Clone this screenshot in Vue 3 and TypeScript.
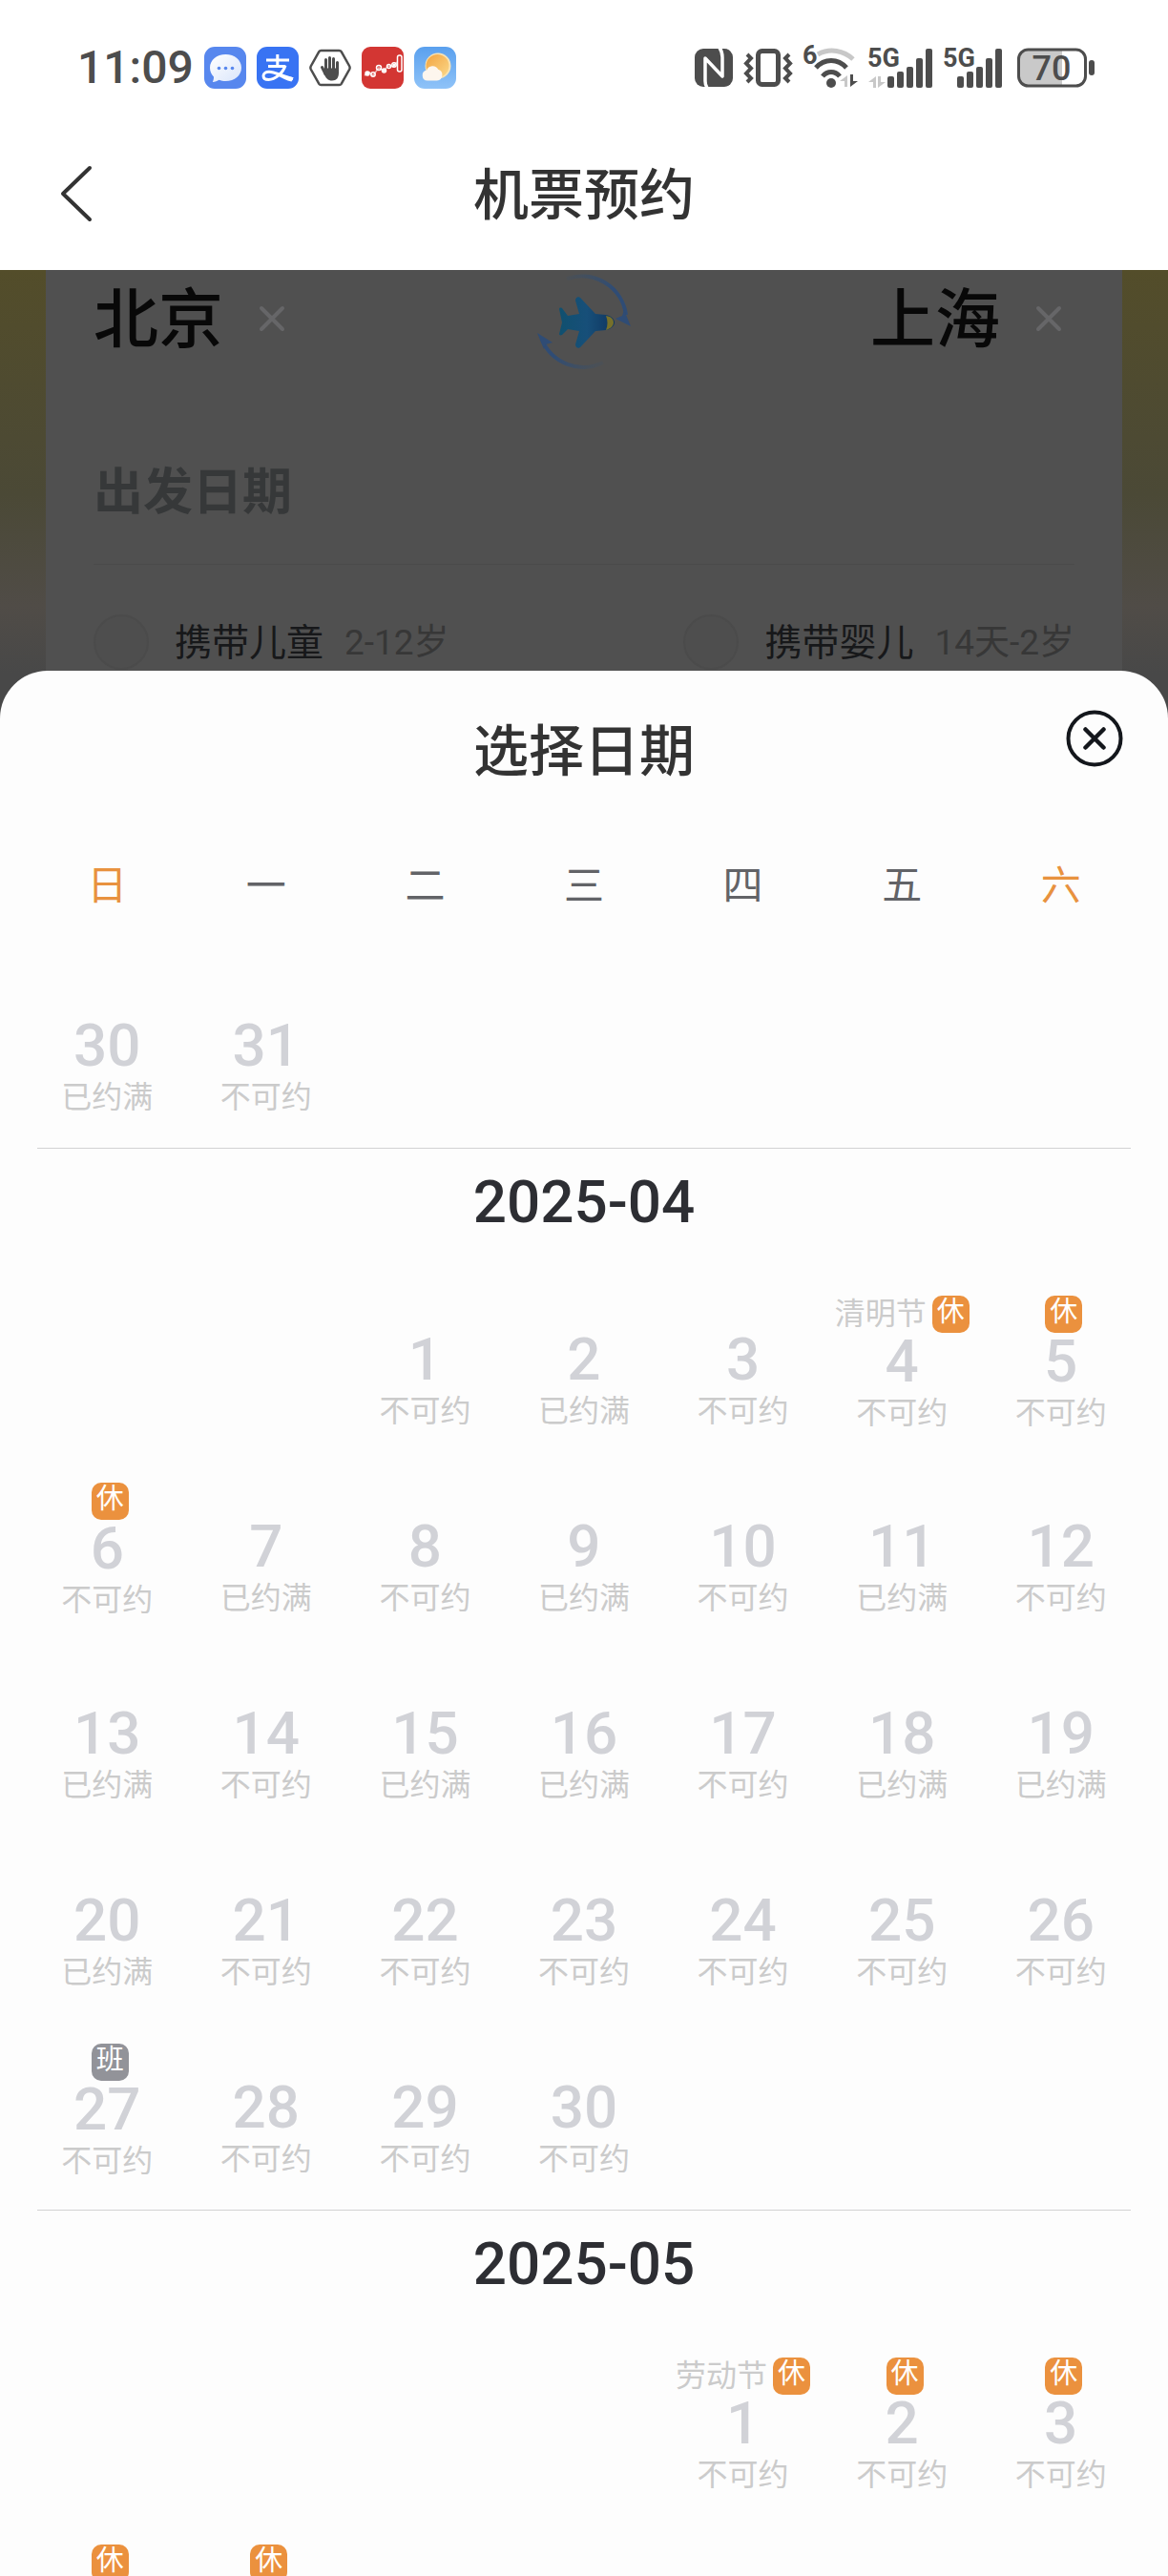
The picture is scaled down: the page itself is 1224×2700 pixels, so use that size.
<script setup lang="ts">
interface Day {
  day: number
  status: string
  label?: string
  tag?: string
}

interface Month {
  key: string
  title: string
  offset: number
  days: Day[]
}

const NO = '不可约'
const FULL = '已约满'

const weekdays: string[] = ['日', '一', '二', '三', '四', '五', '六']

const fullInApril: number[] = [2, 7, 9, 11, 13, 15, 16, 18, 19, 20]
const aprilTags: Record<number, string> = { 4: '休', 5: '休', 6: '休', 27: '班' }

const april: Day[] = Array.from({ length: 30 }, (_, i) => {
  const day = i + 1
  return {
    day,
    status: fullInApril.includes(day) ? FULL : NO,
    tag: aprilTags[day],
    label: day === 4 ? '清明节' : undefined,
  }
})

const may: Day[] = Array.from({ length: 5 }, (_, i) => ({
  day: i + 1,
  status: NO,
  tag: '休',
  label: i === 0 ? '劳动节' : undefined,
}))

const months: Month[] = [
  { key: '2025-03', title: '', offset: 0, days: [{ day: 30, status: FULL }, { day: 31, status: NO }] },
  { key: '2025-04', title: '2025-04', offset: 2, days: april },
  { key: '2025-05', title: '2025-05', offset: 4, days: may },
]

const bars: number[] = [12, 17, 22, 31, 41]
</script>

<template>
  <div class="app">
    <div class="status-bar">
      <div class="status-side">
        <span class="clock">11:09</span>
        <svg class="app-icon" viewBox="0 0 44 44" aria-hidden="true">
          <defs>
            <linearGradient id="bubble" x1="0" y1="0" x2="1" y2="1">
              <stop offset="0" stop-color="#fff" />
              <stop offset="1" stop-color="#d9e5fb" />
            </linearGradient>
          </defs>
          <rect width="44" height="44" rx="11" fill="#5787ee" />
          <path d="M22.500 8C13 8 6 14 6 22c0 4 1.500 7 4 9.500 0 2-.3 3.500-1.200 5.500 2.700 0 5-1 6.700-2.200 2 .8 4.500 1.200 7 1.200 9.500 0 16.500-6 16.500-14S32 8 22.500 8z" fill="url(#bubble)" />
          <g fill="#5787ee"><circle cx="15.500" cy="22.500" r="1.800" /><circle cx="22.500" cy="22.500" r="1.800" /><circle cx="29.500" cy="22.500" r="1.800" /></g>
        </svg>
        <svg class="app-icon" viewBox="0 0 44 44" aria-hidden="true">
          <rect width="44" height="44" rx="11" fill="#3873f3" />
          <g fill="none" stroke="#fff" stroke-width="3">
            <path d="M10 14h24M12 20.500h18M21.800 8v12" />
            <path d="M30 19.500C27.500 28 19 34.500 12.500 34.500c-3.500 0-5.500-1.500-5.500-4 0-2.500 2.500-4.300 6-4.300 6 0 12 4 25 7.500" />
          </g>
          <path d="M24 29l14.500 3.200-2 4.300C31 35.500 27 33 22 30.500z" fill="#fff" />
        </svg>
        <svg class="app-icon" viewBox="0 0 44 44" aria-hidden="true">
          <path d="M12.500 4h19c1 0 1.700.4 2.200 1.200l8.600 15.300c.5 1 .5 2 0 3L33.700 38.800c-.5.8-1.200 1.200-2.200 1.200h-19c-1 0-1.700-.4-2.200-1.200L1.700 23.500c-.5-1-.5-2 0-3L10.300 5.200C10.800 4.400 11.500 4 12.500 4z" fill="none" stroke="#4d4d4d" stroke-width="2.500" />
          <g stroke="#4d4d4d" stroke-width="3" stroke-linecap="round" fill="none">
            <path d="M17.500 13.500v11M21.500 11.500v12M25.500 12.500v12M29.500 16.500v9M13.500 21.500l3.500 7" />
          </g>
          <path d="M16 22.500h15v5c0 5-2.500 8-7 8-4.500 0-6.500-2.500-9-8z" fill="#4d4d4d" />
        </svg>
        <svg class="app-icon" viewBox="0 0 44 44" aria-hidden="true">
          <rect width="44" height="44" rx="9" fill="#d33633" />
          <g fill="none" stroke="#fff" stroke-width="1.500">
            <path d="M3 30l5-3 4 3 6-8 5 3 5-5 5 1 4-5" opacity=".6" />
            <circle cx="6" cy="28" r="2" fill="#fff" />
            <circle cx="12" cy="29" r="2.200" />
            <circle cx="18" cy="22" r="2.500" />
            <circle cx="23.500" cy="25" r="2" />
            <circle cx="28.500" cy="20.500" r="2" />
            <circle cx="34" cy="19" r="2.200" />
            <rect x="37.500" y="9" width="4.500" height="17" rx="2" />
          </g>
          <circle cx="23.500" cy="25" r="1.500" fill="#fff" /><circle cx="34" cy="19" r="1.500" fill="#fff" />
        </svg>
        <svg class="app-icon" viewBox="0 0 44 44" aria-hidden="true">
          <defs>
            <linearGradient id="sky" x1="0" y1="0" x2="0" y2="1">
              <stop offset="0" stop-color="#5aa0ee" />
              <stop offset="1" stop-color="#8fc3f8" />
            </linearGradient>
            <linearGradient id="sun" x1="0" y1="0" x2="1" y2="1">
              <stop offset="0" stop-color="#f2a340" />
              <stop offset="1" stop-color="#fbd98a" />
            </linearGradient>
          </defs>
          <rect width="44" height="44" rx="11" fill="url(#sky)" />
          <circle cx="25" cy="20" r="13.500" fill="#f8e3b4" />
          <circle cx="24.500" cy="20" r="12" fill="url(#sun)" />
          <path d="M14 35.500a5.500 5.500 0 0 1-.8-10.900 6.500 6.500 0 0 1 12-.8A6 6 0 0 1 24 35.500z" fill="#fdf6ee" />
        </svg>
      </div>

      <div class="status-side status-right">
        <svg width="40" height="42" viewBox="0 0 40 42" aria-hidden="true">
          <rect y="1" width="40" height="40" rx="9" fill="#4d4d4d" />
          <path d="M13 42c-1.500-2-2-4-2-7V11l18 19V10c0-4-1-7-3-10" fill="none" stroke="#fff" stroke-width="3.500" stroke-linejoin="round" />
        </svg>
        <svg width="50" height="42" viewBox="0 0 50 42" aria-hidden="true">
          <rect x="14.500" y="3.500" width="21" height="35" rx="4" fill="none" stroke="#4d4d4d" stroke-width="5" />
          <path d="M3 7l4 4-5 5.500 5 5L2 27l5 5-4 4M47 7l-4 4 5 5.500-5 5 5 5.500-5 5 4 4" fill="none" stroke="#4d4d4d" stroke-width="4" />
        </svg>
        <svg width="56" height="44" viewBox="0 0 56 44" aria-hidden="true">
          <text x="-1" y="18" class="tiny-text">6</text>
          <path d="M15 8c13-7 27-4 37 5" fill="none" stroke="#c8c8c8" stroke-width="5" />
          <path d="M13 22c9-10 23-10 32 0M20 31c5-6 13-6 18 0" fill="none" stroke="#4d4d4d" stroke-width="5" />
          <circle cx="29" cy="38" r="5" fill="#4d4d4d" />
          <path d="M46 30v12h-3v-6h-5z" fill="#c8c8c8" />
          <path d="M49 42V29h3v7h5z" fill="#4d4d4d" />
        </svg>
        <svg width="67" height="42" viewBox="0 0 67 42" aria-hidden="true">
          <text x="-1" y="20" class="tiny-text">5G</text>
          <path d="M8 30v12H5v-6H0zM10 42V30h3v6h5z" fill="#c8c8c8" />
          <rect v-for="(h, i) in bars" :key="i" :x="20 + i * 10" :y="42 - h" width="7" :height="h" rx="2" fill="#4d4d4d" />
        </svg>
        <svg width="61" height="42" viewBox="0 0 61 42" aria-hidden="true">
          <text x="-1" y="20" class="tiny-text">5G</text>
          <rect v-for="(h, i) in bars" :key="i" :x="14 + i * 10" :y="42 - h" width="7" :height="h" rx="2" fill="#4d4d4d" />
        </svg>
        <svg class="battery" width="82" height="42" viewBox="0 0 82 42" aria-hidden="true">
          <path d="M12 3h35v36H12c-6 0-10-4-10-10V13C2 7 6 3 12 3z" fill="#c9c9c9" />
          <rect x="1.500" y="2" width="70" height="38" rx="10" fill="none" stroke="#4d4d4d" stroke-width="3" />
          <rect x="75" y="13" width="6" height="16" rx="3" fill="#4d4d4d" />
          <text x="36" y="34" text-anchor="middle" class="battery-text">70</text>
        </svg>
      </div>
    </div>

    <header class="nav">
      <button type="button" class="back" aria-label="返回">
        <svg width="40" height="64" viewBox="0 0 40 64" aria-hidden="true">
          <path d="M34 5L6 32l28 27" fill="none" stroke="#333" stroke-width="4" stroke-linecap="round" stroke-linejoin="round" />
        </svg>
      </button>
      <h1 class="nav-title">机票预约</h1>
    </header>

    <main class="trip">
      <section class="card">
        <div class="cities">
          <div class="city">
            <span>北京</span>
            <button type="button" class="clear" aria-label="清除出发城市">
              <svg width="54" height="54" viewBox="0 0 54 54"><path d="M16 16l22 22M38 16L16 38" stroke="#666668" stroke-width="4" stroke-linecap="round" /></svg>
            </button>
          </div>
          <button type="button" class="swap" aria-label="交换城市">
            <svg width="100" height="100" viewBox="0 0 100 100">
              <defs>
                <linearGradient id="arcTop" gradientUnits="userSpaceOnUse" x1="28" y1="0" x2="80" y2="20">
                  <stop offset="0" stop-color="#38506a" stop-opacity="0.1" />
                  <stop offset="1" stop-color="#2f4c75" />
                </linearGradient>
                <linearGradient id="arcBottom" gradientUnits="userSpaceOnUse" x1="20" y1="80" x2="72" y2="98">
                  <stop offset="0" stop-color="#2f4c75" />
                  <stop offset="1" stop-color="#38506a" stop-opacity="0.1" />
                </linearGradient>
                <linearGradient id="plane" x1="0" y1="0" x2="1" y2="0">
                  <stop offset="0" stop-color="#10506f" />
                  <stop offset="0.5" stop-color="#174f79" />
                  <stop offset="1" stop-color="#0f3560" />
                </linearGradient>
              </defs>
              <path d="M32 6A47 47 0 0 1 94 44" fill="none" stroke="url(#arcTop)" stroke-width="4" />
              <path d="M92 39l7 17-16-8 7-3z" fill="#2f4c75" />
              <path d="M70 94A47 47 0 0 1 6 70" fill="none" stroke="url(#arcBottom)" stroke-width="4" />
              <path d="M8 80L1 63l16 10-7 2z" fill="#2f4c75" />
              <path d="M24 38c0-1 1-2 3-1l6 8 12-2-4-14c0-4 4-5 6-2l15 16 11 1c6 1 9 5 9 8s-3 7-9 8l-11 1-15 16c-2 3-6 2-6-2l4-14-12-2-6 6c-2 1-3 0-3-1l3-12z" fill="url(#plane)" />
              <path d="M73 45c6 1 8 4 8 7s-2 6-8 8c2-5 2-10 0-15z" fill="#77702a" />
            </svg>
          </button>
          <div class="city city-to">
            <span>上海</span>
            <button type="button" class="clear" aria-label="清除到达城市">
              <svg width="54" height="54" viewBox="0 0 54 54"><path d="M16 16l22 22M38 16L16 38" stroke="#666668" stroke-width="4" stroke-linecap="round" /></svg>
            </button>
          </div>
        </div>
        <div class="date-field">出发日期</div>
        <div class="options">
          <label class="option"><input type="checkbox" /><span>携带儿童</span><small>2-12岁</small></label>
          <label class="option"><input type="checkbox" /><span>携带婴儿</span><small>14天-2岁</small></label>
        </div>
      </section>
    </main>

    <section class="sheet" role="dialog" aria-labelledby="sheet-title">
      <div class="sheet-head">
        <h2 id="sheet-title">选择日期</h2>
        <button type="button" class="close" aria-label="关闭">
          <svg width="60" height="60" viewBox="0 0 60 60">
            <circle cx="30" cy="30" r="27.500" fill="none" stroke="#14171c" stroke-width="4" />
            <path d="M20.500 20.500l19 19M39.500 20.500l-19 19" stroke="#14171c" stroke-width="4.500" stroke-linecap="round" />
          </svg>
        </button>
      </div>
      <div class="week">
        <span v-for="name in weekdays" :key="name" :class="{ weekend: name === '日' || name === '六' }">{{ name }}</span>
      </div>
      <div class="months">
        <section v-for="month in months" :key="month.key">
          <h3 v-if="month.title" class="month-title">{{ month.title }}</h3>
          <div class="grid">
            <span v-for="n in month.offset" :key="'blank' + n"></span>
            <button v-for="d in month.days" :key="d.day" type="button" class="day" disabled>
              <span class="note" :class="{ tagged: d.tag }">
                {{ d.label }}<i v-if="d.tag" class="tag" :class="{ work: d.tag === '班' }">{{ d.tag }}</i>
              </span>
              <span class="number">{{ d.day }}</span>
              <span class="state">{{ d.status }}</span>
            </button>
          </div>
        </section>
      </div>
    </section>
  </div>
</template>

<style>
body {
  background: #fdfdfd;
}
</style>

<style scoped>
.app {
  display: flex;
  flex-direction: column;
  height: 100vh;
  overflow: hidden;
  background: #fff;
  color: #333;
  font-family: Roboto, "Noto Sans CJK SC", sans-serif;
}

button {
  padding: 0;
  border: 0;
  background: none;
  font: inherit;
  color: inherit;
}

svg {
  display: block;
  flex: none;
  overflow: visible;
}

h1,
h2,
h3 {
  margin: 0;
  font-weight: 500;
}

.status-bar {
  display: flex;
  flex: none;
  align-items: center;
  justify-content: space-between;
  height: 102px;
  padding: 20px 76px 0 81px;
}

.status-side {
  display: flex;
  align-items: center;
  gap: 11px;
}

.status-right {
  gap: 12px;
}

.clock {
  font-size: 48px;
  font-weight: 500;
  line-height: 58px;
  color: #4d4d4d;
}

.app-icon {
  width: 44px;
  height: 44px;
}

.tiny-text {
  font-size: 27px;
  font-weight: 700;
  fill: #4d4d4d;
}

.battery {
  margin-left: 4px;
}

.battery-text {
  font-size: 36px;
  font-weight: 500;
  fill: #4d4d4d;
}

.nav {
  display: grid;
  grid-template-columns: 160px 1fr 160px;
  flex: none;
  align-items: center;
  height: 161px;
}

.back {
  padding-left: 60px;
}

.nav-title {
  padding-top: 4px;
  font-size: 58px;
  line-height: 80px;
  text-align: center;
}

.trip {
  flex: none;
  padding: 0 48px;
  background: linear-gradient(#534d2a, #4b4936 50%, #504c47 75%, #484848 90%);
}

.card {
  padding: 0 50px;
  background: #505050;
}

.cities {
  display: grid;
  grid-template-columns: 1fr auto 1fr;
  align-items: center;
  height: 106px;
}

.city {
  display: flex;
  align-items: center;
  gap: 24px;
  font-size: 68px;
  font-weight: 500;
  line-height: 100px;
  color: #080808;
}

.city-to {
  justify-content: flex-end;
}

.clear {
  padding-bottom: 4px;
}

.date-field {
  padding-top: 53px;
  border-bottom: 1px solid #4a4a4a;
  font-size: 52px;
  font-weight: 700;
  line-height: 149px;
  color: #363839;
}

.options {
  display: flex;
  justify-content: space-between;
  height: 161px;
}

.option {
  display: flex;
  align-items: center;
  font-size: 39px;
  color: #17181a;
}

.option span,
.option small {
  padding-bottom: 6px;
}

.option input {
  width: 58px;
  height: 58px;
  margin: 0 27px 0 0;
  border: 2px solid #4b4b4b;
  border-radius: 50%;
  background: #4e4e4e;
  appearance: none;
}

.option small {
  margin-left: 22px;
  font-size: 37px;
  color: #373737;
}

.sheet {
  position: relative;
  display: flex;
  flex: 1;
  flex-direction: column;
  min-height: 0;
  margin-top: -50px;
  border-radius: 50px 50px 0 0;
  background: #fdfdfd;
}

.sheet-head {
  display: grid;
  grid-template-columns: 1fr auto 1fr;
  align-items: center;
  padding: 41px 47px 0;
}

.sheet-head h2 {
  grid-column: 2;
  padding-top: 4px;
  font-size: 58px;
  line-height: 80px;
}

.close {
  align-self: start;
  justify-self: end;
}

.week {
  display: grid;
  grid-template-columns: repeat(7, 1fr);
  padding: 69px 29px 47px;
  font-size: 42px;
  line-height: 63px;
  text-align: center;
  color: #626367;
}

.weekend {
  color: #e8923f;
}

.months {
  flex: 1;
  min-height: 0;
  overflow-y: auto;
  scrollbar-width: none;
}

.month-title {
  margin: 0 39px;
  padding-bottom: 20px;
  border-top: 1px solid #d2d2d3;
  font-size: 62px;
  line-height: 112px;
  text-align: center;
  color: #2d2e33;
}

.grid {
  display: grid;
  grid-template-columns: repeat(7, 1fr);
  grid-auto-rows: 196px;
  padding: 0 29px;
}

.day {
  display: flex;
  flex-direction: column;
  align-items: center;
  padding-top: 22px;
  color: #cbcbcb;
}

.note {
  display: flex;
  align-items: center;
  justify-content: center;
  height: 39px;
  font-size: 32px;
  line-height: 39px;
  white-space: nowrap;
}

.tagged {
  padding-bottom: 2px;
}

.tag {
  width: 39px;
  height: 39px;
  margin-left: 6px;
  border-radius: 10px;
  background: #eb913e;
  font-size: 29px;
  font-style: normal;
  line-height: 34px;
  text-align: center;
  color: #fff;
}

.work {
  background: #929399;
}

.number {
  font-size: 62px;
  font-weight: 500;
  line-height: 56px;
  color: #d1d2d7;
}

.state {
  font-size: 32px;
  line-height: 52px;
}
</style>
